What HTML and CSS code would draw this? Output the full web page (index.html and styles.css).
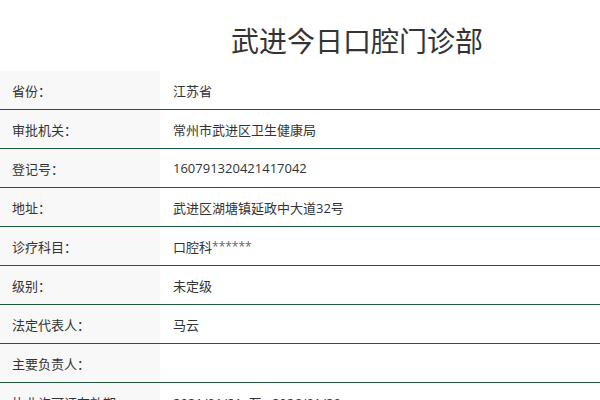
FILE: index.html
```html
<!DOCTYPE html>
<html lang="zh">
<head>
<meta charset="utf-8">
<link rel="stylesheet" href="styles.css">
</head>
<body>
<div class="page">
  <h1 class="title">武进今日口腔门诊部</h1>
  <div class="table">
    <div class="row"><div class="label">省份：</div><div class="value">江苏省</div></div>
    <div class="row"><div class="label">审批机关：</div><div class="value">常州市武进区卫生健康局</div></div>
    <div class="row"><div class="label">登记号：</div><div class="value">160791320421417042</div></div>
    <div class="row"><div class="label">地址：</div><div class="value">武进区湖塘镇延政中大道32号</div></div>
    <div class="row"><div class="label">诊疗科目：</div><div class="value">口腔科<span class="mask">******</span></div></div>
    <div class="row"><div class="label">级别：</div><div class="value">未定级</div></div>
    <div class="row"><div class="label">法定代表人：</div><div class="value">马云</div></div>
    <div class="row"><div class="label">主要负责人：</div><div class="value"></div></div>
    <div class="row"><div class="label">执业许可证有效期：</div><div class="value">2021/01/21&nbsp;&nbsp;至&nbsp;&nbsp;&nbsp;2026/01/20</div></div>
  </div>
</div>
</body>
</html>
```
FILE: styles.css
```css
html, body {
  margin: 0;
  padding: 0;
  background: #fff;
}
.page {
  font-family: "Open Sans", "Noto Sans CJK SC", sans-serif;
  color: #333;
  font-size: 13px;
}
.title {
  margin: 0;
  height: 71px;
  line-height: 80px;
  box-sizing: border-box;
  padding-left: 114px;
  text-align: center;
  font-family: "Noto Sans CJK SC", sans-serif;
  font-weight: normal;
  font-size: 28px;
  color: #333;
}
.table {
  display: flex;
  flex-direction: column;
}
.row {
  display: flex;
  height: 39px;
  box-sizing: border-box;
  border-bottom: 1px solid #1d5a3c;
}
.label {
  width: 160px;
  flex: none;
  background: #f8f8f8;
  padding-left: 12px;
  box-sizing: border-box;
  display: flex;
  align-items: center;
}
.value {
  flex: 1;
  padding-left: 13px;
  display: flex;
  align-items: center;
  white-space: pre;
}
.mask {
  font-size: 12px;
  color: #666;
}
```
